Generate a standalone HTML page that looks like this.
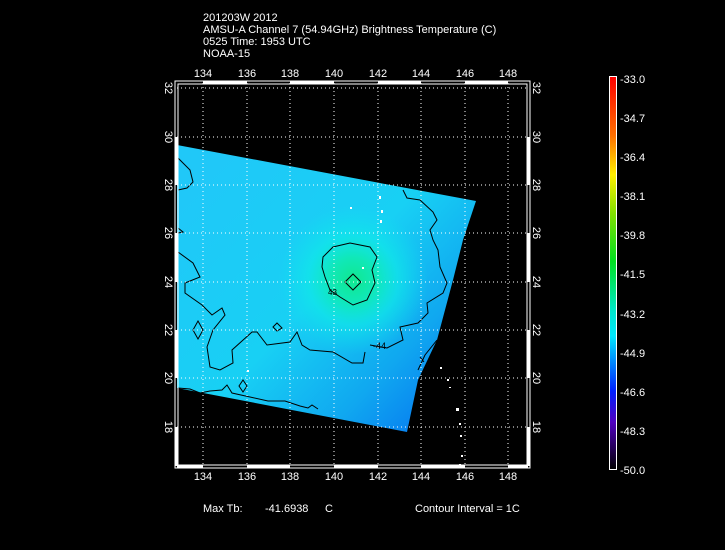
<!DOCTYPE html>
<html><head><style>
body{margin:0;background:#000;width:725px;height:550px;overflow:hidden}
svg{display:block}
text{font-family:"Liberation Sans",sans-serif;font-size:11px;fill:#fff}
</style></head><body>
<svg width="725" height="550" viewBox="0 0 725 550">
<defs>
<linearGradient id="cb" x1="0" y1="0" x2="0" y2="1">
<stop offset="0" stop-color="#ff0000"/>
<stop offset="0.15" stop-color="#ff7000"/>
<stop offset="0.25" stop-color="#ffee00"/>
<stop offset="0.35" stop-color="#80e000"/>
<stop offset="0.47" stop-color="#00e020"/>
<stop offset="0.6" stop-color="#00e8d0"/>
<stop offset="0.66" stop-color="#00e8ff"/>
<stop offset="0.8" stop-color="#0020ff"/>
<stop offset="0.88" stop-color="#5000c0"/>
<stop offset="1" stop-color="#000000"/>
</linearGradient>
<radialGradient id="hot" cx="353" cy="280" r="75" gradientUnits="userSpaceOnUse">
<stop offset="0" stop-color="#10e890"/>
<stop offset="0.3" stop-color="#10e8b8"/>
<stop offset="0.6" stop-color="#10e8e8" stop-opacity="0.7"/>
<stop offset="1" stop-color="#10e0f0" stop-opacity="0"/>
</radialGradient>
<linearGradient id="sw" x1="177" y1="200" x2="420" y2="430" gradientUnits="userSpaceOnUse">
<stop offset="0" stop-color="#20c8f8"/>
<stop offset="0.5" stop-color="#18d0f4"/>
<stop offset="0.8" stop-color="#10a8f0"/>
<stop offset="1" stop-color="#0880f0"/>
</linearGradient>
</defs>
<text x="203" y="21">201203W 2012</text>
<text x="203" y="33">AMSU-A Channel 7 (54.94GHz) Brightness Temperature (C)</text>
<text x="203" y="45">0525 Time: 1953 UTC</text>
<text x="203" y="57">NOAA-15</text>
<polygon points="177,145 476,201 463,240 453,280 437,340 418,380 407,432 177,388" fill="url(#sw)"/>
<polygon points="177,145 476,201 463,240 453,280 437,340 418,380 407,432 177,388" fill="url(#hot)"/>
<g fill="none" stroke="#000" stroke-width="1">
<path d="M403,190 L407,198 420,200 433,212 437,220 430,230 433,240 438,250 440,267 447,283 443,293 427,303 428,313 418,323 400,327 403,340 387,348 370,345 M365,352 L363,363 352,363 333,352 310,350 302,345 297,332 290,342 267,345 257,332 252,332 232,350 233,363 220,370 210,367 207,347 213,330 225,315 222,308 212,315 202,305 185,293 185,283 200,277 193,263 178,252"/>
<path d="M178,158 L190,170 193,182 187,188 178,190"/>
<path d="M323,257 L333,247 350,243 370,247 377,257 372,270 375,283 367,300 353,305 340,297 330,290 325,277 322,267 Z"/>
<path d="M345,282 L353,274 361,282 353,290 Z"/>
<path d="M198,321 L203,330 198,339 193,330Z"/>
<path d="M243,380 L247,386 243,392 239,386Z"/>
<path d="M273,327 L277,323 282,328 277,331Z"/>
<path d="M178,388 L190,389 200,393 210,391 222,390 227,385 232,393 250,397 268,401 285,401 300,406 308,408 312,405 318,409 M178,228 L183,232 178,233"/>
<path d="M437,340 L425,355 418,370 M420,357 L424,362"/>
</g>
<text x="373" y="349" style="font-size:9px;fill:#000">-44</text>
<text x="328" y="295" style="font-size:8px;fill:#000">43</text>
<g fill="#fff">
<rect x="379" y="196" width="2" height="3"/><rect x="381" y="210" width="2" height="3"/><rect x="350" y="207" width="2" height="2"/><rect x="380" y="220" width="2" height="3"/><rect x="362" y="267" width="2" height="2"/><rect x="247" y="370" width="2" height="2"/>
<rect x="440" y="367" width="2" height="2"/><rect x="447" y="379" width="2" height="2"/><rect x="449" y="387" width="2" height="1"/><rect x="456" y="408" width="3" height="3"/><rect x="459" y="423" width="2" height="2"/><rect x="460" y="435" width="2" height="2"/><rect x="461" y="455" width="2" height="2"/><rect x="459" y="464" width="2" height="2"/>
</g>
<g stroke="#fff" stroke-dasharray="1,3" stroke-width="1">
<line x1="203" y1="83" x2="203" y2="466"/><line x1="247" y1="83" x2="247" y2="466"/>
<line x1="290" y1="83" x2="290" y2="466"/><line x1="334" y1="83" x2="334" y2="466"/>
<line x1="378" y1="83" x2="378" y2="466"/><line x1="421" y1="83" x2="421" y2="466"/>
<line x1="465" y1="83" x2="465" y2="466"/><line x1="508" y1="83" x2="508" y2="466"/>
<line x1="177" y1="88" x2="527" y2="88"/><line x1="177" y1="137" x2="527" y2="137"/>
<line x1="177" y1="185" x2="527" y2="185"/><line x1="177" y1="233" x2="527" y2="233"/>
<line x1="177" y1="282" x2="527" y2="282"/><line x1="177" y1="330" x2="527" y2="330"/>
<line x1="177" y1="378" x2="527" y2="378"/><line x1="177" y1="427" x2="527" y2="427"/>
</g>
<rect x="175" y="81" width="355" height="387" fill="none" stroke="#fff" stroke-width="1"/>
<rect x="178" y="84" width="349" height="381" fill="none" stroke="#fff" stroke-width="1"/>
<g stroke="#fff" stroke-width="3">
<line x1="203" y1="82.5" x2="247" y2="82.5"/><line x1="290" y1="82.5" x2="334" y2="82.5"/><line x1="378" y1="82.5" x2="421" y2="82.5"/><line x1="465" y1="82.5" x2="508" y2="82.5"/>
<line x1="177" y1="466.5" x2="203" y2="466.5"/><line x1="247" y1="466.5" x2="290" y2="466.5"/><line x1="334" y1="466.5" x2="378" y2="466.5"/><line x1="421" y1="466.5" x2="465" y2="466.5"/><line x1="508" y1="466.5" x2="528" y2="466.5"/>
<line x1="176.5" y1="137" x2="176.5" y2="185"/><line x1="176.5" y1="233" x2="176.5" y2="282"/><line x1="176.5" y1="330" x2="176.5" y2="378"/><line x1="176.5" y1="427" x2="176.5" y2="466"/>
<line x1="528.5" y1="137" x2="528.5" y2="185"/><line x1="528.5" y1="233" x2="528.5" y2="282"/><line x1="528.5" y1="330" x2="528.5" y2="378"/><line x1="528.5" y1="427" x2="528.5" y2="466"/>
</g>
<g text-anchor="middle">
<text x="203" y="77">134</text><text x="247" y="77">136</text><text x="290" y="77">138</text><text x="334" y="77">140</text><text x="378" y="77">142</text><text x="421" y="77">144</text><text x="465" y="77">146</text><text x="508" y="77">148</text>
<text x="203" y="480">134</text><text x="247" y="480">136</text><text x="290" y="480">138</text><text x="334" y="480">140</text><text x="378" y="480">142</text><text x="421" y="480">144</text><text x="465" y="480">146</text><text x="508" y="480">148</text>
</g>
<g text-anchor="middle">
<text transform="translate(165,88) rotate(90)">32</text><text transform="translate(165,137) rotate(90)">30</text><text transform="translate(165,185) rotate(90)">28</text><text transform="translate(165,233) rotate(90)">26</text><text transform="translate(165,282) rotate(90)">24</text><text transform="translate(165,330) rotate(90)">22</text><text transform="translate(165,378) rotate(90)">20</text><text transform="translate(165,427) rotate(90)">18</text>
<text transform="translate(533,88) rotate(90)">32</text><text transform="translate(533,137) rotate(90)">30</text><text transform="translate(533,185) rotate(90)">28</text><text transform="translate(533,233) rotate(90)">26</text><text transform="translate(533,282) rotate(90)">24</text><text transform="translate(533,330) rotate(90)">22</text><text transform="translate(533,378) rotate(90)">20</text><text transform="translate(533,427) rotate(90)">18</text>
</g>
<rect x="609.5" y="76.5" width="7" height="393" fill="url(#cb)" stroke="#fff" stroke-width="1"/>
<g>
<text x="620" y="83">-33.0</text><text x="620" y="122">-34.7</text><text x="620" y="161">-36.4</text><text x="620" y="200">-38.1</text><text x="620" y="239">-39.8</text><text x="620" y="278">-41.5</text><text x="620" y="318">-43.2</text><text x="620" y="357">-44.9</text><text x="620" y="396">-46.6</text><text x="620" y="435">-48.3</text><text x="620" y="474">-50.0</text>
</g>
<text x="203" y="512">Max Tb:</text>
<text x="265" y="512">-41.6938</text>
<text x="325" y="512">C</text>
<text x="415" y="512">Contour Interval = 1C</text>
</svg>
</body></html>
